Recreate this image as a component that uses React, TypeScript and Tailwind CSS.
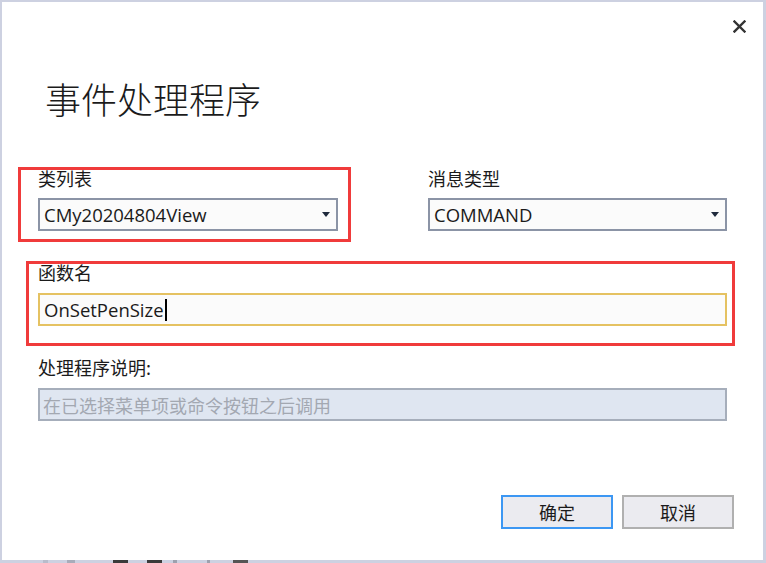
import React from "react";

const FONT = { fontFamily: '"Noto Sans CJK SC", "Noto Sans", sans-serif' };
const LATIN = { fontFamily: '"Open Sans", "Noto Sans CJK SC", sans-serif' };

function Caret() {
  return (
    <svg width="8" height="5" viewBox="0 0 8 5" className="shrink-0">
      <path d="M0 0 H8 L4 5 Z" fill="#1f2a3c" />
    </svg>
  );
}

function Select({ value }: { value: string }) {
  return (
    <div className="h-[33px] border-2 border-[#8b94a6] bg-[#fbfbfb] flex items-center pl-[4px] pr-[6px] justify-between">
      <span className="text-[18.5px] leading-none pt-[2px] text-[#1a1a1a]" style={LATIN}>{value}</span>
      <Caret />
    </div>
  );
}

export default function App() {
  return (
    <div
      className="w-[766px] h-[563px] bg-[#cdd1e1] pt-[2px] pl-[2px] pr-[3px] overflow-hidden relative"
      style={FONT}
    >
      <div className="bg-white h-[558px] relative px-[36px] flex flex-col">
        <button className="absolute top-[17px] right-[17px] w-[14px] h-[14px] flex items-center justify-center">
          <svg width="13" height="13" viewBox="0 0 13 13">
            <path d="M1.5 1.5 L11.5 11.5 M11.5 1.5 L1.5 11.5" stroke="#333" strokeWidth="2.4" strokeLinecap="square" />
          </svg>
        </button>

        <h1 className="mt-[72px] pl-[7px] text-[36px] leading-[48px] font-light text-[#1b1b1b]">
          事件处理程序
        </h1>

        <div className="mt-[44px] grid grid-cols-[300px_1fr] gap-x-[90px]">
          <div className="relative">
            <div className="text-[18px] leading-[24px] text-[#1b1b1b]">类列表</div>
            <div className="mt-[8px]">
              <Select value="CMy20204804View" />
            </div>
            <div className="pointer-events-none absolute -left-[20px] top-[1px] -right-[13px] -bottom-[11px] border-[3px] border-[#f03b3b]" />
          </div>
          <div>
            <div className="text-[18px] leading-[24px] text-[#1b1b1b]">消息类型</div>
            <div className="mt-[8px]">
              <Select value="COMMAND" />
            </div>
          </div>
        </div>

        <div className="relative mt-[29px]">
          <div className="text-[18px] leading-[24px] text-[#1b1b1b]">函数名</div>
          <div className="mt-[9px] h-[33px] border-2 border-[#e5c262] bg-[#fbfbfb] flex items-center pl-[4px]">
            <span className="text-[18.5px] leading-none pt-[2px] text-[#1a1a1a]" style={LATIN}>OnSetPenSize</span>
            <span className="ml-[1px] w-[2px] h-[22px] bg-black" />
          </div>
          <div className="pointer-events-none absolute -left-[12px] top-[1px] -right-[8px] -bottom-[20px] border-[3px] border-[#f03b3b]" />
        </div>

        <div className="mt-[29px]">
          <div className="text-[18px] leading-[24px] text-[#1b1b1b]">处理程序说明:</div>
          <div className="mt-[9px] h-[33px] border-2 border-[#a6aebb] bg-[#dfe6f1] flex items-center pl-[3px]">
            <span className="text-[18px] leading-none text-[#a3a8b1]">在已选择菜单项或命令按钮之后调用</span>
          </div>
        </div>

        <div className="mt-[74px] flex justify-end gap-[9px] -mr-[7px]">
          <button className="w-[112px] h-[34px] border-2 border-[#3c97f3] bg-[#ebebf0] text-[18px] leading-none text-[#1b1b1b]">
            确定
          </button>
          <button className="w-[112px] h-[34px] border-2 border-[#b0b0b0] bg-[#ebebf0] text-[18px] leading-none text-[#1b1b1b]">
            取消
          </button>
        </div>
      </div>

      <div className="flex items-start h-[3px] pl-[41px]">
        <span className="w-[5px] h-[3px] bg-[#b8bccb]" />
        <span className="ml-[19px] w-[8px] h-[3px] bg-[#a8acba]" />
        <span className="ml-[38px] w-[15px] h-[3px] bg-[#3a3a3a]" />
        <span className="ml-[19px] w-[15px] h-[3px] bg-[#3a3a3a]" />
        <span className="ml-[11px] w-[4px] h-[3px] bg-[#9da1ae]" />
        <span className="ml-[30px] w-[3px] h-[3px] bg-[#9da1ae]" />
        <span className="ml-[23px] w-[15px] h-[3px] bg-[#555]" />
      </div>
    </div>
  );
}
